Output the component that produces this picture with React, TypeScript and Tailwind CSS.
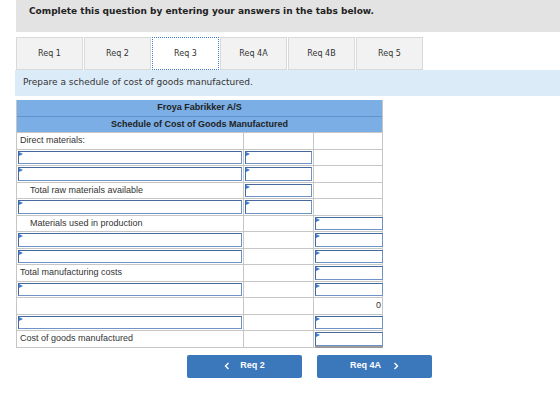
import React from 'react';

type Cell = 'label' | 'input' | 'empty' | 'zero';

type Row = {
    label?: string;
    indent?: boolean;
    cols: [Cell, Cell, Cell];
    total?: boolean;
};

const rows: Row[] = [
    { label: 'Direct materials:', cols: ['label', 'empty', 'empty'] },
    { cols: ['input', 'input', 'empty'] },
    { cols: ['input', 'input', 'empty'] },
    { label: 'Total raw materials available', indent: true, cols: ['label', 'input', 'empty'] },
    { cols: ['input', 'input', 'empty'] },
    { label: 'Materials used in production', indent: true, cols: ['label', 'empty', 'input'] },
    { cols: ['input', 'empty', 'input'] },
    { cols: ['input', 'empty', 'input'] },
    { label: 'Total manufacturing costs', cols: ['label', 'empty', 'input'] },
    { cols: ['input', 'empty', 'input'] },
    { cols: ['empty', 'empty', 'zero'] },
    { cols: ['input', 'empty', 'input'] },
    { label: 'Cost of goods manufactured', cols: ['label', 'empty', 'input'], total: true },
];

const tabs = ['Req 1', 'Req 2', 'Req 3', 'Req 4A', 'Req 4B', 'Req 5'];

function InputBox({ total }: { total?: boolean }) {
    return (
        <div
            className={
                'relative h-full w-full bg-white border border-[#6f93c6] border-l-[#45699c] border-t-[#45699c] ' +
                (total ? 'shadow-[0_2px_0_#9a9a9a]' : '')
            }
        >
            {/* little marker in the corner of each entry box */}
            <span className="absolute left-0 top-0 h-0 w-0 border-y-[2px] border-l-[4px] border-y-transparent border-l-[#3b7bd4]" />
        </div>
    );
}

function TableRow({ row }: { row: Row }) {
    return (
        <div className="grid h-[16.5px] grid-cols-[227px_70px_70px] border-b border-[#c6c6c6]">
            {row.cols.map((c, i) => (
                <div
                    key={i}
                    className={
                        'h-full ' +
                        (i < 2 ? 'border-r border-[#c6c6c6] ' : '') +
                        (c === 'input' ? 'p-px' : '')
                    }
                >
                    {c === 'label' && (
                        <div className={'flex h-full items-center text-[9px] text-[#333] ' + (row.indent ? 'pl-[13px]' : 'pl-[3px]')}>
                            {row.label}
                        </div>
                    )}
                    {c === 'input' && <InputBox total={row.total && i === 2} />}
                    {c === 'zero' && (
                        <div className="flex h-full items-center justify-end pr-[3px] text-[9px] text-[#333]">0</div>
                    )}
                </div>
            ))}
        </div>
    );
}

export default function App() {
    return (
        <div className="relative h-[413px] w-[560px] overflow-hidden bg-white font-['DejaVu_Sans',sans-serif]">
            <div className="ml-4 h-8 bg-[#e3e3e3] pl-[13px] pt-[5px] text-[9px] font-bold text-[#222]">
                Complete this question by entering your answers in the tabs below.
            </div>

            <div className="ml-4 mt-[5px] flex h-[33px]">
                {tabs.map((t) =>
                    t === 'Req 3' ? (
                        <div
                            key={t}
                            className="mr-px flex w-[67px] items-center justify-center border border-dotted border-[#3f7fd0] bg-white text-[8px] text-[#333]"
                        >
                            {t}
                        </div>
                    ) : (
                        <div
                            key={t}
                            className="mr-px flex w-[67px] items-center justify-center border border-[#d9d9d9] bg-[#f2f2f2] text-[8px] text-[#333]"
                        >
                            {t}
                        </div>
                    )
                )}
            </div>

            <div className="ml-[15px] flex h-[26px] items-center bg-[#dcebf8] pl-[8px] text-[9px] text-[#333]">
                Prepare a schedule of cost of goods manufactured.
            </div>

            <div className="ml-4 mt-1 w-[367px] border-l border-r border-[#c6c6c6] font-['Liberation_Sans',Arial,sans-serif]">
                <div className="flex h-[17px] items-center justify-center border-b border-[#5f93cf] bg-[#7aaee5] text-[9px] font-bold text-[#222]">
                    Froya Fabrikker A/S
                </div>
                <div className="flex h-4 items-center justify-center border-b border-[#c6c6c6] bg-[#7aaee5] text-[9px] font-bold text-[#222]">
                    Schedule of Cost of Goods Manufactured
                </div>
                {rows.map((r, i) => (
                    <TableRow key={i} row={r} />
                ))}
            </div>

            <div className="ml-[187px] mt-[7px] flex gap-[15px] font-['Liberation_Sans',Arial,sans-serif]">
                <button className="flex h-[23px] w-[115px] items-center justify-center gap-[10px] rounded-[2px] bg-[#3a77bb] text-[9px] font-bold text-white">
                    <svg width="6" height="8" viewBox="0 0 6 8" fill="none" stroke="white" strokeWidth="1.4">
                        <path d="M4.5 1 1.5 4l3 3" />
                    </svg>
                    Req 2
                </button>
                <button className="flex h-[23px] w-[115px] items-center justify-center gap-[12px] rounded-[2px] bg-[#3a77bb] text-[9px] font-bold text-white">
                    Req 4A
                    <svg width="6" height="8" viewBox="0 0 6 8" fill="none" stroke="white" strokeWidth="1.4">
                        <path d="M1.5 1l3 3-3 3" />
                    </svg>
                </button>
            </div>
        </div>
    );
}
